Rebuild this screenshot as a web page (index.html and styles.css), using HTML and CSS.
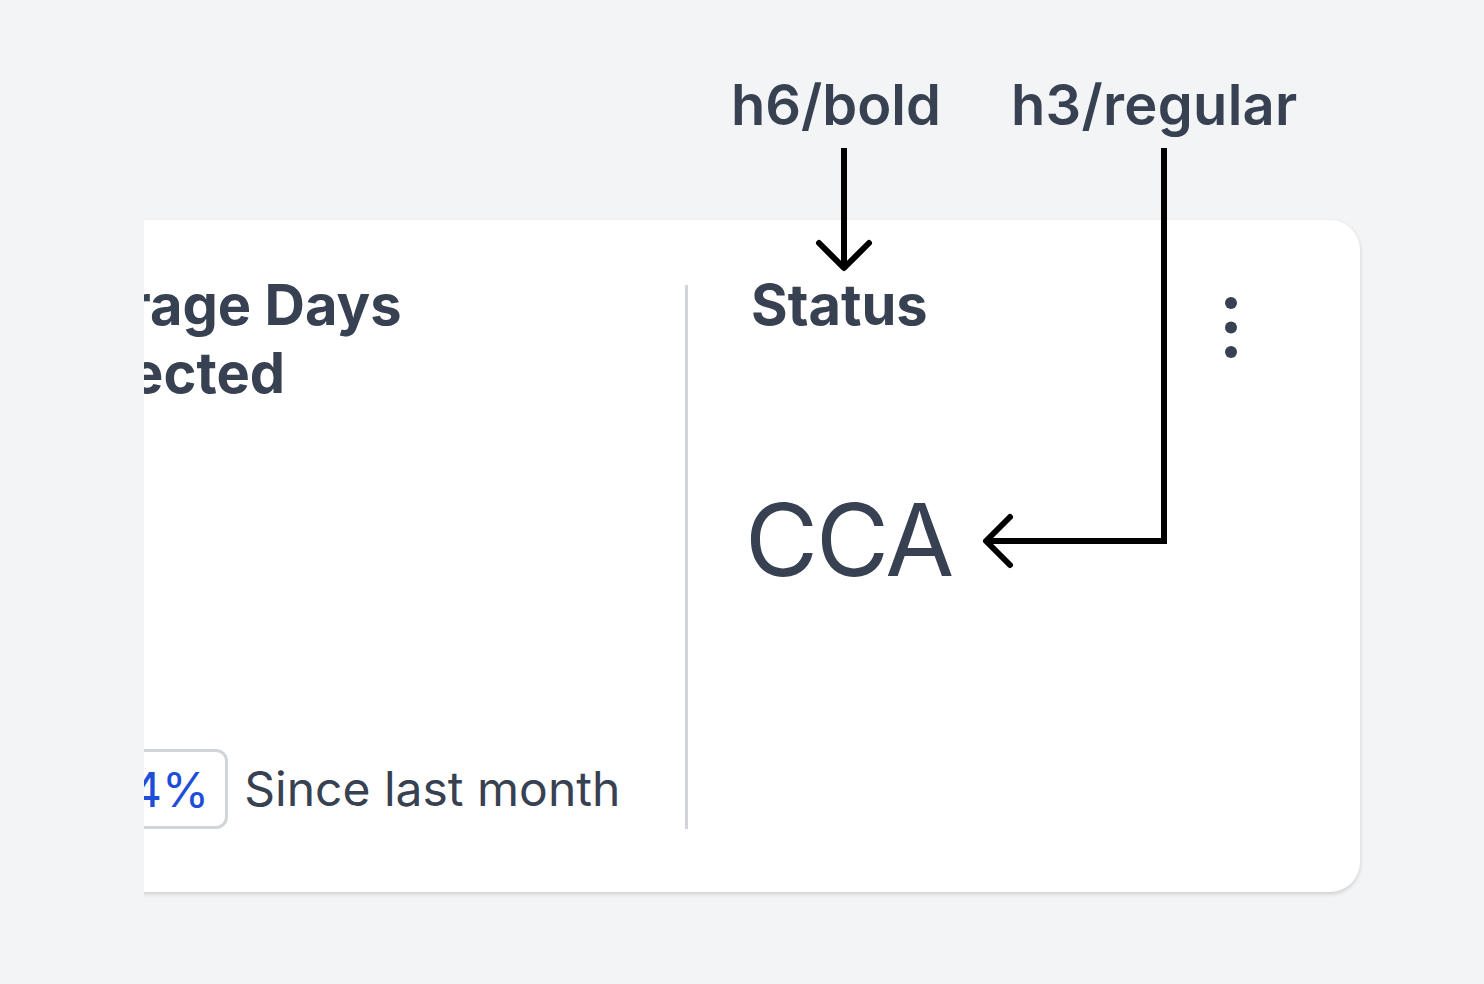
FILE: index.html
```html
<!DOCTYPE html>
<html lang="en">
<head>
<meta charset="utf-8">
<title>Status card annotation</title>
<link rel="stylesheet" href="styles.css">
</head>
<body>
<div class="stage">
  <div class="card">
    <div class="col-left">
      <h6 class="title">Average Days Collected</h6>
      <div class="trend">
        <span class="badge">2.4%</span>
        <span class="since">Since last month</span>
      </div>
    </div>
    <div class="divider"></div>
    <div class="col-right">
      <div class="status-block">
        <h6 class="title">Status</h6>
        <h3 class="value">CCA</h3>
      </div>
      <svg class="kebab" width="14" height="64" viewBox="0 0 14 64" aria-hidden="true">
        <circle cx="7" cy="7" r="6" fill="#374151"/>
        <circle cx="7" cy="31.5" r="6" fill="#374151"/>
        <circle cx="7" cy="56" r="6" fill="#374151"/>
      </svg>
    </div>
  </div>

  <div class="annotations">
    <span class="label label-h6">h6/bold</span>
    <span class="label label-h3">h3/regular</span>
    <svg class="arrows" width="1484" height="984" viewBox="0 0 1484 984" aria-hidden="true">
      <g fill="none" stroke="#000" stroke-width="6">
        <line x1="844" y1="148" x2="844" y2="266"/>
        <polyline points="819,243 844,268 869,243" stroke-linecap="round" stroke-linejoin="round"/>
        <polyline points="1164,148 1164,541 987,541" stroke-linejoin="miter"/>
        <polyline points="1010,517 986,541 1010,565" stroke-linecap="round" stroke-linejoin="round"/>
      </g>
    </svg>
  </div>
</div>
</body>
</html>
```

FILE: styles.css
```css
html, body {
  margin: 0;
  padding: 0;
}

body {
  background: #f3f4f6;
  font-family: Inter, "Noto Sans", "Liberation Sans", sans-serif;
  color: #374151;
  width: 1484px;
  height: 984px;
  overflow: hidden;
}

.stage {
  position: relative;
  width: 1484px;
  height: 984px;
  padding-top: 220px;
  box-sizing: border-box;
}

.card {
  margin-left: -32px;
  width: 1392px;
  height: 672px;
  box-sizing: border-box;
  background: #ffffff;
  border-radius: 30px;
  box-shadow: 0 2px 4px rgba(0, 0, 0, 0.16);
  clip-path: inset(-20px -20px -20px 176px);
  display: flex;
  padding: 51px 0 63px 0;
}

.col-left {
  flex: 0 0 717px;
  box-sizing: border-box;
  padding-left: 56px;
  display: flex;
  flex-direction: column;
}

.title {
  margin: 0;
  font-size: 56px;
  line-height: 68px;
  font-weight: 700;
  color: #374151;
  width: 420px;
}

.trend {
  margin-top: auto;
  display: flex;
  align-items: center;
  gap: 16px;
}

.badge {
  display: inline-flex;
  align-items: center;
  height: 80px;
  box-sizing: border-box;
  border: 3px solid #d1d5db;
  border-radius: 12px;
  padding: 0 16px 0 61px;
  font-size: 48px;
  color: #1d4ed8;
}

.since {
  font-size: 48px;
  color: #374151;
  line-height: 80px;
}

.divider {
  flex: 0 0 3px;
  margin-top: 14px;
  background: #d1d5db;
}

.col-right {
  flex: 1 1 auto;
  display: flex;
  justify-content: space-between;
  align-items: flex-start;
  padding-left: 63px;
  padding-right: 122px;
}

.status-block {
  display: flex;
  flex-direction: column;
}

.value {
  margin: 141px 0 0 -6px;
  font-size: 100px;
  line-height: 120px;
  font-weight: 400;
  letter-spacing: -2px;
  color: #374151;
}

.kebab {
  margin-top: 25px;
  display: block;
}

.annotations {
  position: absolute;
  inset: 0;
  pointer-events: none;
}

.label {
  position: absolute;
  top: 71px;
  font-size: 56px;
  line-height: 68px;
  font-weight: 600;
  color: #374151;
  white-space: nowrap;
}

.label-h6 { left: 731px; }
.label-h3 { left: 1011px; letter-spacing: 0.3px; }

.arrows {
  position: absolute;
  top: 0;
  left: 0;
}
```
